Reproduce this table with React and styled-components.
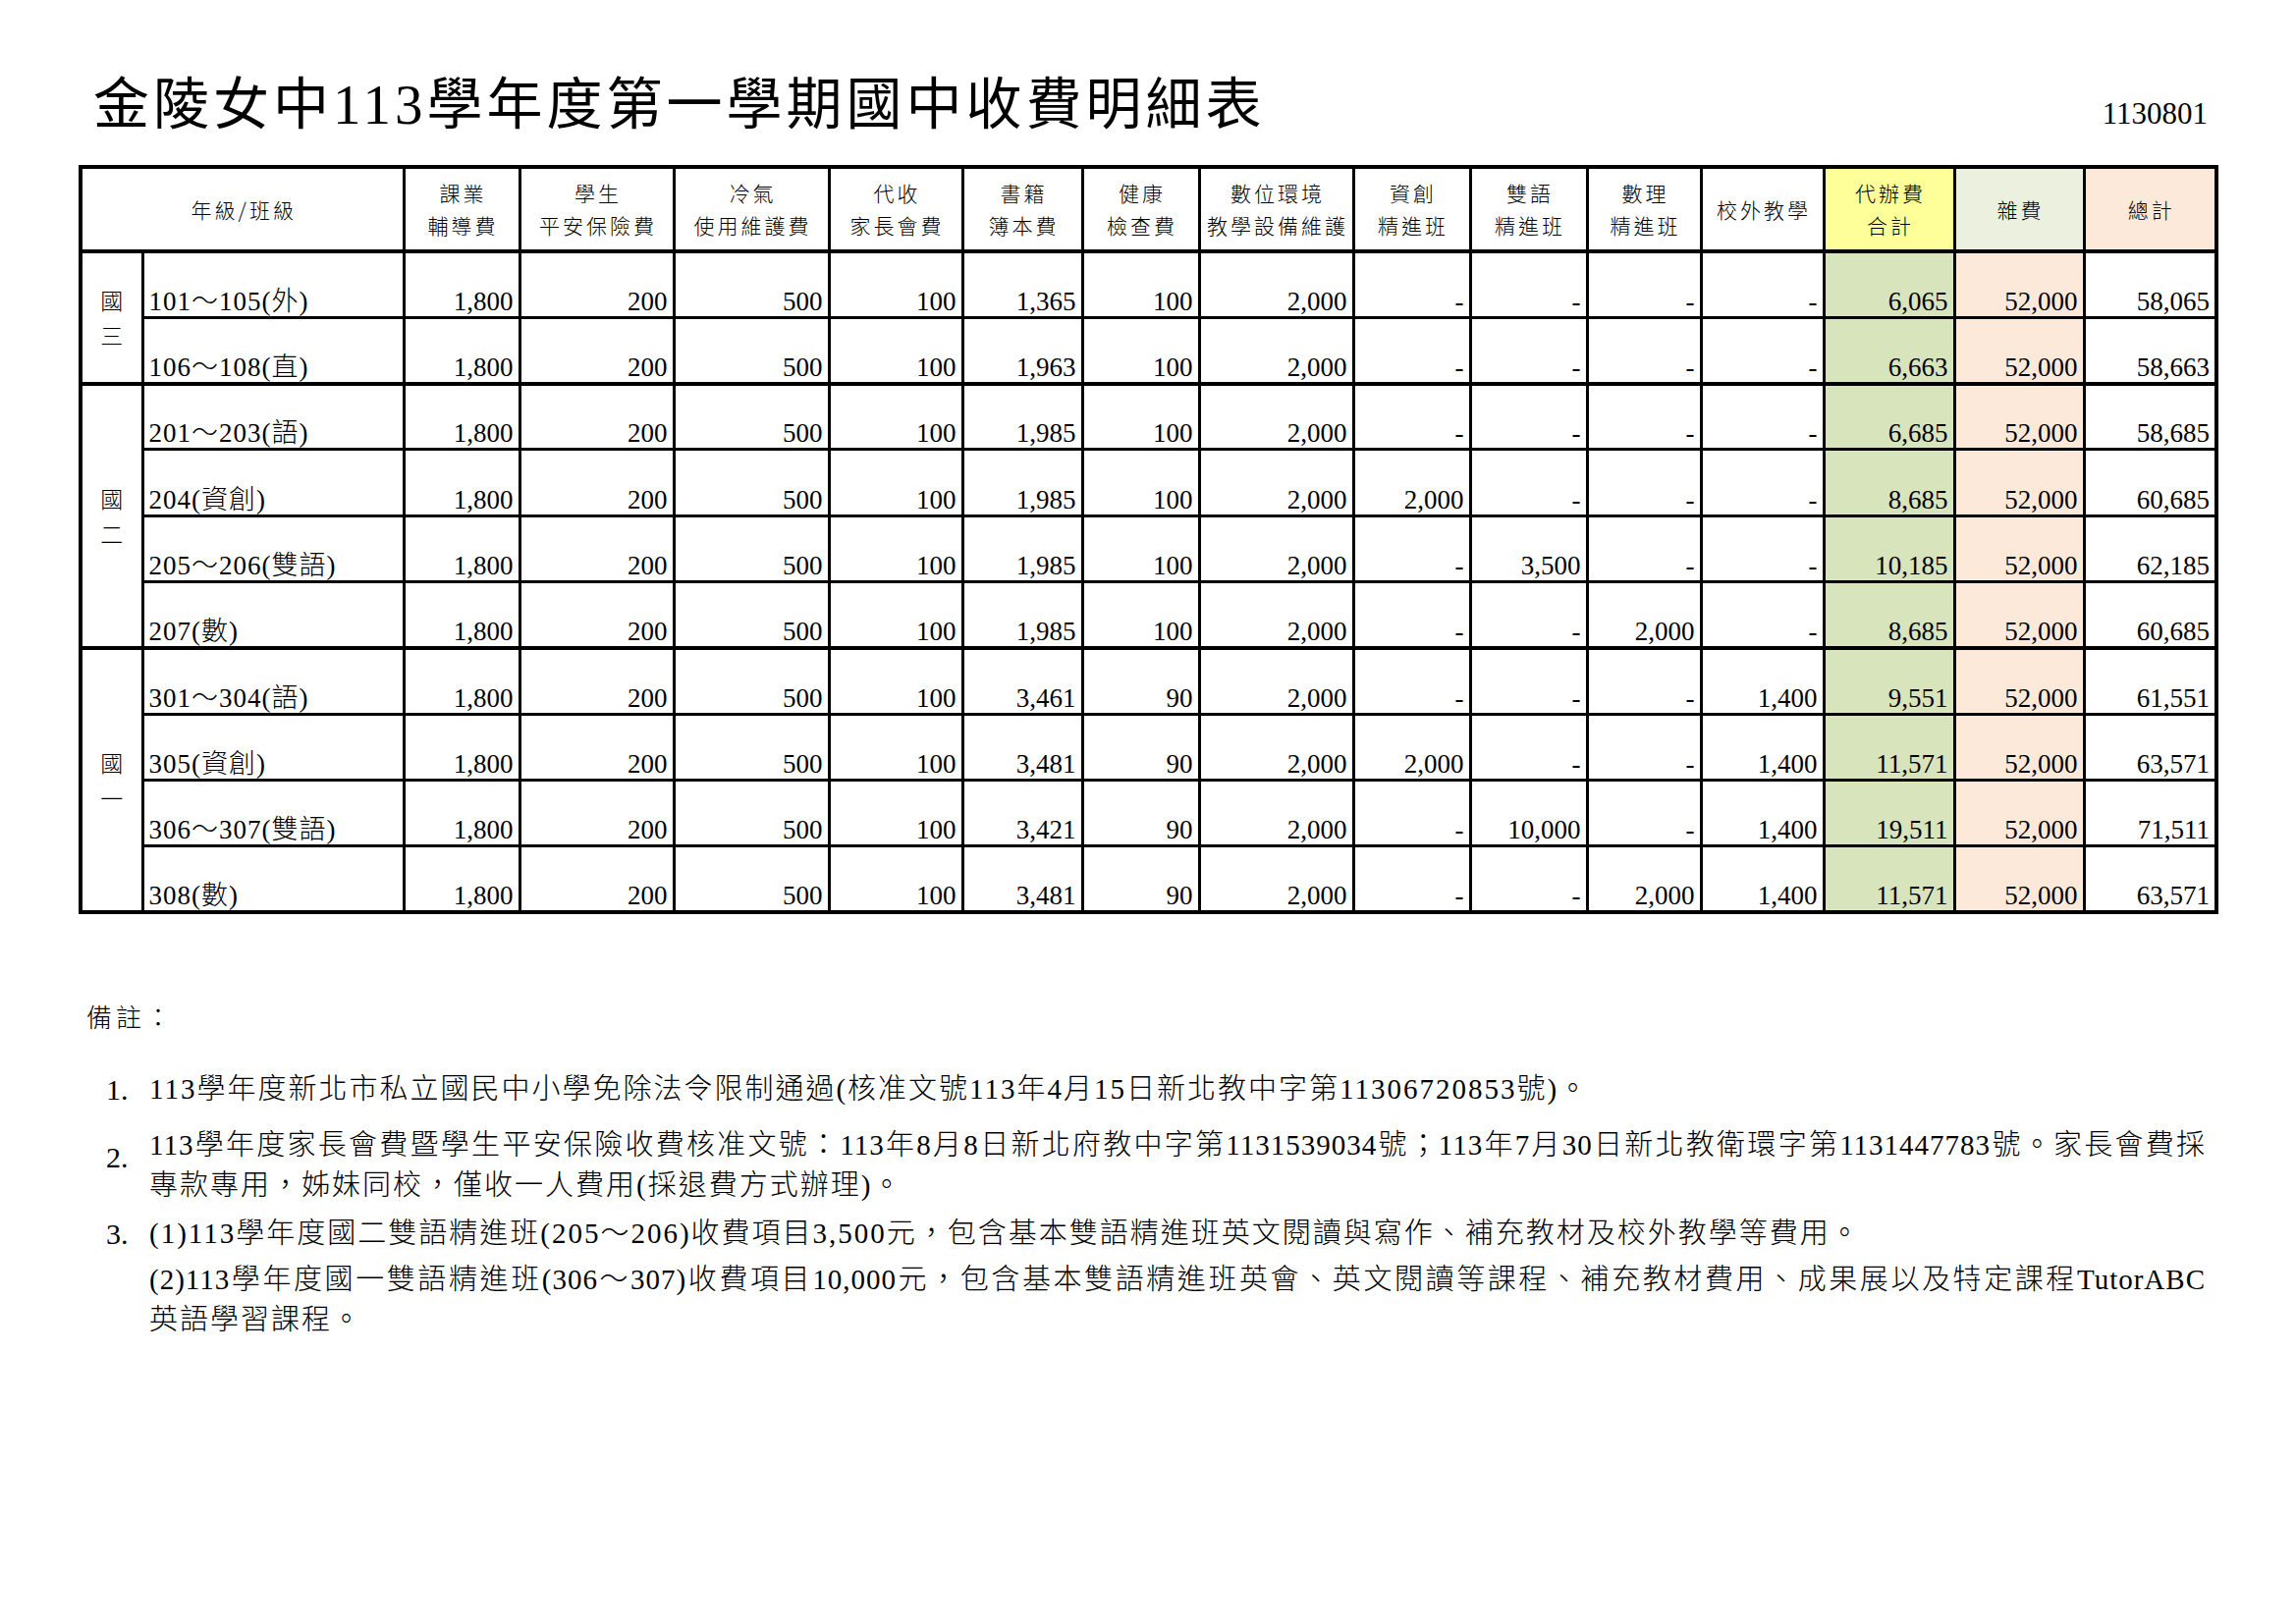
import React from "react";
import styled, { createGlobalStyle } from "styled-components";

const SERIF = `"Liberation Serif", "Noto Sans CJK TC", serif`;
const CJK = `"Noto Sans CJK TC", "Liberation Serif", sans-serif`;

const GlobalStyle = createGlobalStyle`
  html, body {
    margin: 0;
    padding: 0;
    background: #fff;
  }
  body {
    font-family: ${SERIF};
    color: #000;
  }
`;

const Page = styled.div`
  width: 2338px;
  min-height: 1654px;
  box-sizing: border-box;
  padding: 0 83px 0 80px;
  background: #fff;
`;

const TitleBar = styled.div`
  display: flex;
  justify-content: space-between;
  align-items: flex-start;
  height: 168px;
  padding: 0 7px 0 15px;
  box-sizing: border-box;
`;

const Title = styled.h1`
  margin: 78px 0 0;
  font-family: ${SERIF};
  font-weight: 400;
  font-size: 57px;
  line-height: 57px;
  letter-spacing: 4px;
  white-space: nowrap;
`;

const DocNo = styled.div`
  margin-top: 100px;
  font-size: 31px;
  line-height: 31px;
`;

const FeeTable = styled.table`
  width: 2175px;
  table-layout: fixed;
  border-collapse: collapse;
  border: 4px solid #000;
`;

const HeadRow = styled.tr`
  height: 86px;
`;

const HeadCell = styled.th`
  border: 3px solid #000;
  border-bottom-width: 4px;
  background: ${(p) => p.$bg || "#fff"};
  padding: 0 0 0 3px;
  font-family: ${CJK};
  font-weight: 300;
  font-size: 21px;
  line-height: 33px;
  letter-spacing: 3px;
  text-align: center;
  vertical-align: middle;
`;

const Row = styled.tr`
  height: 67.3px;
`;

const Cell = styled.td`
  border: 3px solid #000;
  border-top-width: ${(p) => (p.$thick ? "4px" : "3px")};
  background: ${(p) => p.$bg || "#fff"};
  padding: 0 5px 1px;
  font-size: 27px;
  font-weight: 300;
  line-height: 27px;
  text-align: right;
  vertical-align: bottom;
  white-space: nowrap;
`;

const ClassCell = styled(Cell)`
  text-align: left;
  padding-left: 5px;
  letter-spacing: 1px;
`;

const GradeCell = styled(Cell)`
  text-align: center;
  vertical-align: middle;
  padding: 0;
`;

const GradeLabel = styled.div`
  font-family: ${CJK};
  font-weight: 300;
  font-size: 23px;
  line-height: 36px;
`;

const Notes = styled.section`
  margin-top: 84px;
`;

const NotesHeading = styled.div`
  margin-left: 8px;
  font-family: ${CJK};
  font-weight: 300;
  font-size: 26px;
  line-height: 40px;
  letter-spacing: 4px;
`;

const NoteItem = styled.div`
  display: grid;
  grid-template-columns: 72px 2094px;
  margin-top: ${(p) => p.$gap}px;
`;

const NoteNum = styled.div`
  padding-left: 28px;
  font-size: 30px;
  line-height: 41px;
  align-self: ${(p) => (p.$middle ? "center" : "start")};
  margin-bottom: ${(p) => (p.$middle ? "16px" : "0")};
`;

const NoteBody = styled.div`
  display: flex;
  flex-direction: column;
  gap: ${(p) => p.$gap || 0}px;
  width: 2094px;
`;

const NoteLine = styled.div`
  font-size: 29px;
  font-weight: 300;
  line-height: 41px;
  letter-spacing: ${(p) => (p.$full ? "1px" : "2px")};
  white-space: ${(p) => (p.$full ? "normal" : "nowrap")};
  text-align: ${(p) => (p.$full ? "justify" : "left")};
  text-align-last: ${(p) => (p.$full ? "justify" : "left")};
`;

const COLS = [63, 266, 118, 157, 158, 136, 122, 119, 157, 119, 119, 116, 125, 133, 132, 135];

const HEADERS = [
  { t: ["課業", "輔導費"] },
  { t: ["學生", "平安保險費"] },
  { t: ["冷氣", "使用維護費"] },
  { t: ["代收", "家長會費"] },
  { t: ["書籍", "簿本費"] },
  { t: ["健康", "檢查費"] },
  { t: ["數位環境", "教學設備維護"] },
  { t: ["資創", "精進班"] },
  { t: ["雙語", "精進班"] },
  { t: ["數理", "精進班"] },
  { t: ["校外教學"] },
  { t: ["代辦費", "合計"], bg: "#ffff99" },
  { t: ["雜費"], bg: "#ebf1de" },
  { t: ["總計"], bg: "#fde9d9" },
];

const BODY_BG = { 11: "#d8e4bc", 12: "#fde9d9" };

const base = ["1,800", "200", "500", "100"];

const GROUPS = [
  {
    grade: ["國", "三"],
    rows: [
      { cls: "101～105(外)", v: [...base, "1,365", "100", "2,000", "-", "-", "-", "-", "6,065", "52,000", "58,065"] },
      { cls: "106～108(直)", v: [...base, "1,963", "100", "2,000", "-", "-", "-", "-", "6,663", "52,000", "58,663"] },
    ],
  },
  {
    grade: ["國", "二"],
    rows: [
      { cls: "201～203(語)", v: [...base, "1,985", "100", "2,000", "-", "-", "-", "-", "6,685", "52,000", "58,685"] },
      { cls: "204(資創)", v: [...base, "1,985", "100", "2,000", "2,000", "-", "-", "-", "8,685", "52,000", "60,685"] },
      { cls: "205～206(雙語)", v: [...base, "1,985", "100", "2,000", "-", "3,500", "-", "-", "10,185", "52,000", "62,185"] },
      { cls: "207(數)", v: [...base, "1,985", "100", "2,000", "-", "-", "2,000", "-", "8,685", "52,000", "60,685"] },
    ],
  },
  {
    grade: ["國", "一"],
    rows: [
      { cls: "301～304(語)", v: [...base, "3,461", "90", "2,000", "-", "-", "-", "1,400", "9,551", "52,000", "61,551"] },
      { cls: "305(資創)", v: [...base, "3,481", "90", "2,000", "2,000", "-", "-", "1,400", "11,571", "52,000", "63,571"] },
      { cls: "306～307(雙語)", v: [...base, "3,421", "90", "2,000", "-", "10,000", "-", "1,400", "19,511", "52,000", "71,511"] },
      { cls: "308(數)", v: [...base, "3,481", "90", "2,000", "-", "-", "2,000", "1,400", "11,571", "52,000", "63,571"] },
    ],
  },
];

const NOTES = [
  {
    num: "1.",
    gap: 34,
    paras: [["113學年度新北市私立國民中小學免除法令限制通過(核准文號113年4月15日新北教中字第11306720853號)。"]],
  },
  {
    num: "2.",
    gap: 16,
    middle: true,
    paras: [
      [
        { text: "113學年度家長會費暨學生平安保險收費核准文號：113年8月8日新北府教中字第1131539034號；113年7月30日新北教衛環字第1131447783號。家長會費採", full: true },
        "專款專用，姊妹同校，僅收一人費用(採退費方式辦理)。",
      ],
    ],
  },
  {
    num: "3.",
    gap: 8,
    paras: [
      ["(1)113學年度國二雙語精進班(205～206)收費項目3,500元，包含基本雙語精進班英文閱讀與寫作、補充教材及校外教學等費用。"],
      [
        { text: "(2)113學年度國一雙語精進班(306～307)收費項目10,000元，包含基本雙語精進班英會、英文閱讀等課程、補充教材費用、成果展以及特定課程TutorABC", full: true },
        "英語學習課程。",
      ],
    ],
  },
];

export default function App() {
  return (
    <Page>
      <GlobalStyle />
      <TitleBar>
        <Title>金陵女中113學年度第一學期國中收費明細表</Title>
        <DocNo>1130801</DocNo>
      </TitleBar>

      <FeeTable>
        <colgroup>
          {COLS.map((w, i) => (
            <col key={i} style={{ width: w }} />
          ))}
        </colgroup>
        <thead>
          <HeadRow>
            <HeadCell colSpan={2}>年級/班級</HeadCell>
            {HEADERS.map((h, i) => (
              <HeadCell key={i} $bg={h.bg}>
                {h.t.map((line, j) => (
                  <div key={j}>{line}</div>
                ))}
              </HeadCell>
            ))}
          </HeadRow>
        </thead>
        <tbody>
          {GROUPS.map((g, gi) =>
            g.rows.map((r, i) => (
              <Row key={`${gi}-${i}`}>
                {i === 0 && (
                  <GradeCell rowSpan={g.rows.length} $thick>
                    {g.grade.map((c) => (
                      <GradeLabel key={c}>{c}</GradeLabel>
                    ))}
                  </GradeCell>
                )}
                <ClassCell $thick={i === 0}>{r.cls}</ClassCell>
                {r.v.map((val, k) => (
                  <Cell key={k} $thick={i === 0} $bg={BODY_BG[k]}>
                    {val}
                  </Cell>
                ))}
              </Row>
            ))
          )}
        </tbody>
      </FeeTable>

      <Notes>
        <NotesHeading>備註：</NotesHeading>
        {NOTES.map((n) => (
          <NoteItem key={n.num} $gap={n.gap}>
            <NoteNum $middle={n.middle}>{n.num}</NoteNum>
            <NoteBody $gap={6}>
              {n.paras.map((p, pi) => (
                <div key={pi}>
                  {p.map((line, li) =>
                    typeof line === "string" ? (
                      <NoteLine key={li}>{line}</NoteLine>
                    ) : (
                      <NoteLine key={li} $full>
                        {line.text}
                      </NoteLine>
                    )
                  )}
                </div>
              ))}
            </NoteBody>
          </NoteItem>
        ))}
      </Notes>
    </Page>
  );
}
